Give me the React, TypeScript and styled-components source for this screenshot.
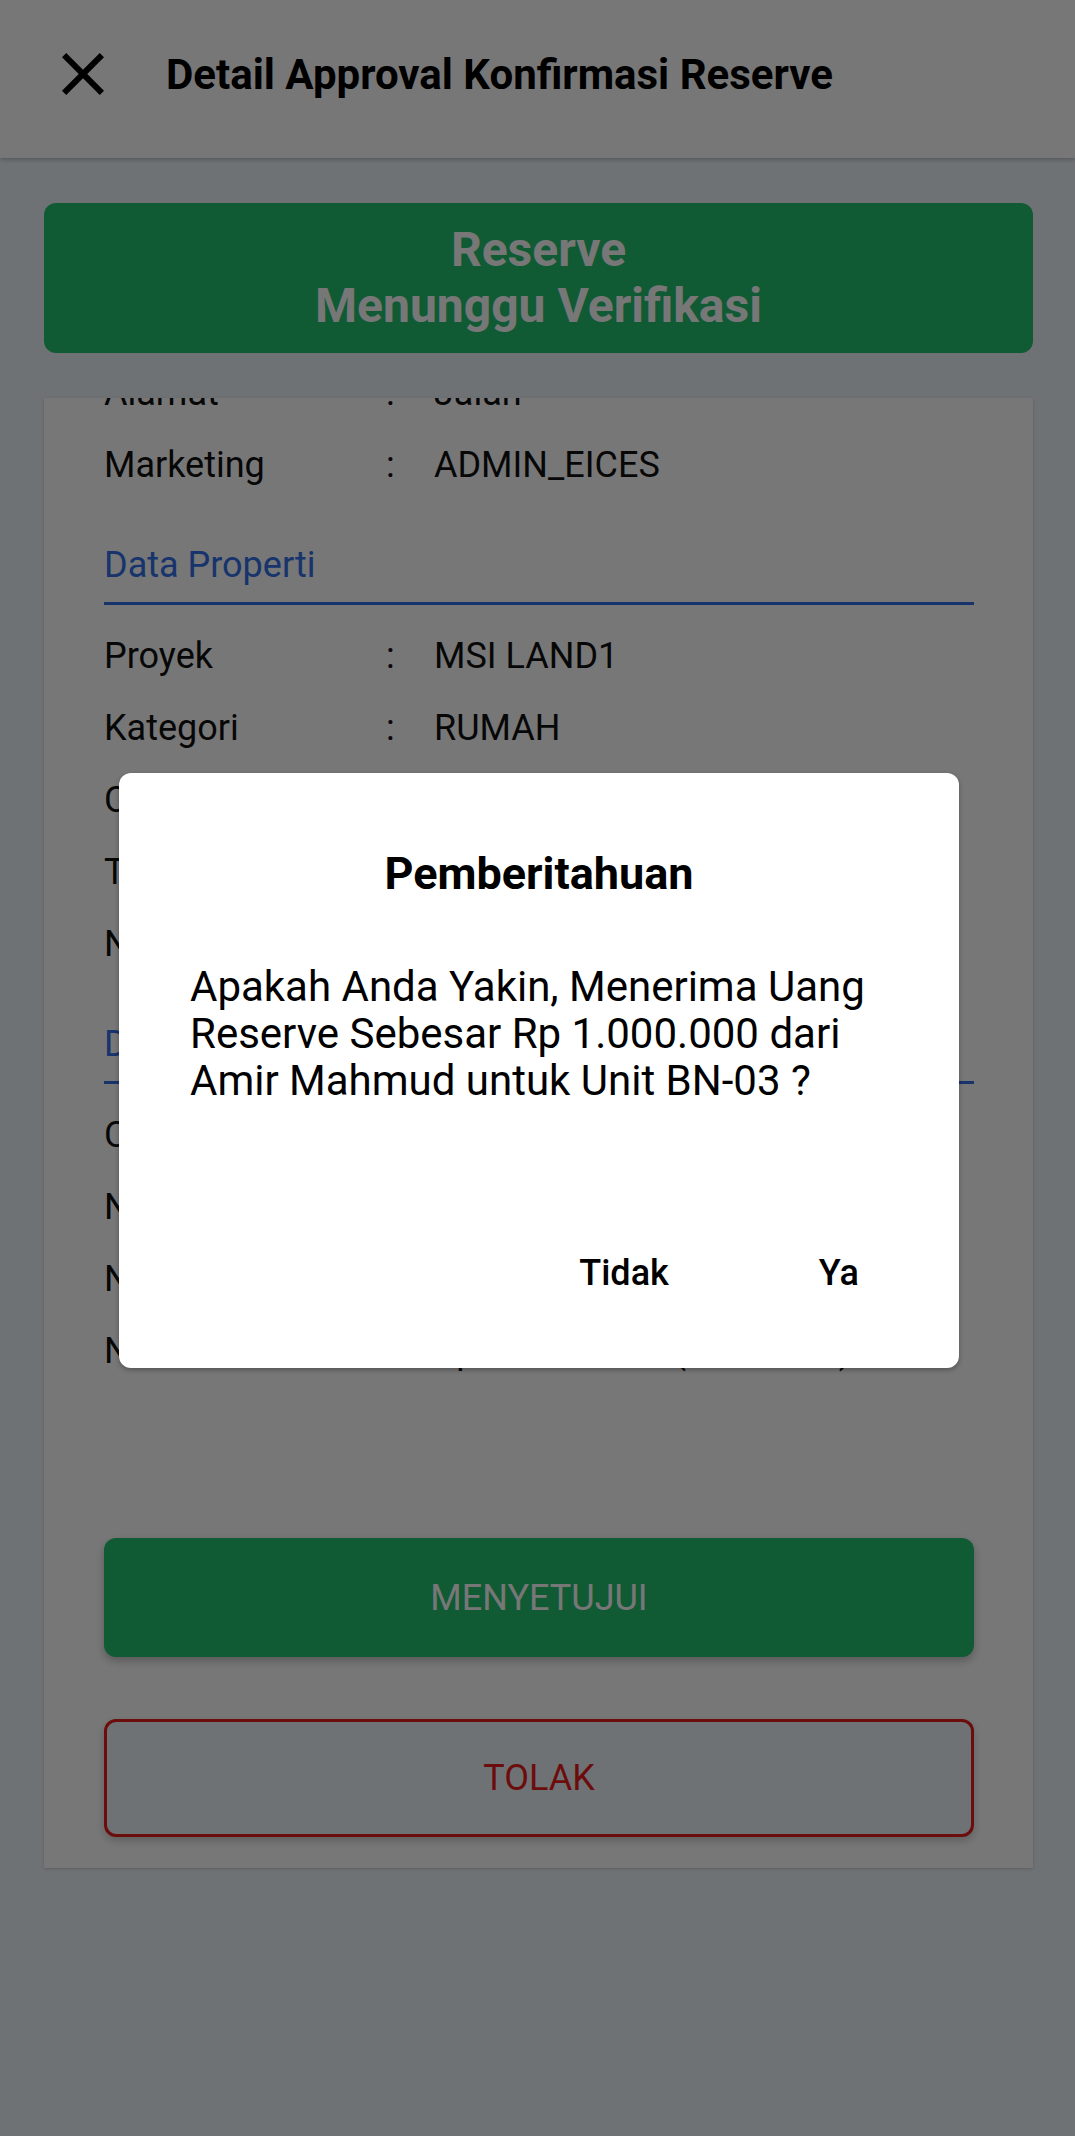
import React, { useLayoutEffect, useRef } from "react";
import styled, { createGlobalStyle } from "styled-components";

const PAGE_BG = "#eef4fb";
const GREEN = "#24c171";
const BLUE = "#3570e8";
const RED = "#e81c1c";

const GlobalStyle = createGlobalStyle`
  * { box-sizing: border-box; }
  html, body { margin: 0; padding: 0; }
  body {
    font-family: Roboto, "Noto Sans", "Liberation Sans", Arial, sans-serif;
    background: ${PAGE_BG};
    color: #111;
  }
`;

const Screen = styled.div`
  position: relative;
  width: 100%;
  height: 2136px;
  overflow: hidden;
  background: ${PAGE_BG};
  display: flex;
  flex-direction: column;
`;

const Header = styled.header`
  height: 158px;
  flex-shrink: 0;
  background: #fff;
  display: flex;
  align-items: center;
  padding: 0 0 10px 62px;
  box-shadow: 0 2px 4px rgba(0, 0, 0, 0.22);
`;

const CloseButton = styled.button`
  width: 42px;
  height: 42px;
  padding: 0;
  border: none;
  background: none;
  display: flex;
  align-items: center;
  justify-content: center;
  color: #000;
`;

const Title = styled.h1`
  margin: 0 0 0 62px;
  font-size: 42px;
  font-weight: 700;
  color: #000;
  line-height: normal;
`;

const Content = styled.main`
  display: flex;
  flex-direction: column;
  gap: 45px;
  padding: 45px 42px 0 44px;
`;

const StatusBanner = styled.div`
  height: 150px;
  border-radius: 12px;
  background: ${GREEN};
  color: #fff;
  display: flex;
  flex-direction: column;
  align-items: center;
  justify-content: center;
  font-size: 48px;
  font-weight: 700;
  line-height: 56px;
`;

const Card = styled.section`
  height: 1470px;
  background: #fff;
  overflow: hidden;
  box-shadow: 0 1px 3px rgba(0, 0, 0, 0.18);
`;

const CardBody = styled.div`
  padding: 40px 59px 31px 60px;
`;

const SectionTitle = styled.h3`
  margin: 28px 0 0;
  font-size: 36px;
  font-weight: 400;
  color: ${BLUE};
  line-height: 72px;
  padding-bottom: 1px;
  border-bottom: 3px solid ${BLUE};

  &:first-child {
    margin-top: 0;
  }
`;

const Rows = styled.div`
  padding-top: 15px;
`;

const Row = styled.div`
  display: grid;
  grid-template-columns: 282px 48px 1fr;
  font-size: 36px;
  line-height: 72px;
  color: #111;
  white-space: nowrap;
`;

const Actions = styled.div`
  margin-top: 151px;
  display: flex;
  flex-direction: column;
  gap: 62px;
`;

const ApproveButton = styled.button`
  height: 119px;
  border: none;
  border-radius: 12px;
  background: ${GREEN};
  color: #fff;
  font-family: inherit;
  font-size: 36px;
  font-weight: 400;
  text-transform: uppercase;
  box-shadow: 0 4px 8px rgba(0, 0, 0, 0.25);
`;

const RejectButton = styled.button`
  height: 118px;
  border: 3px solid ${RED};
  border-radius: 12px;
  background: ${PAGE_BG};
  color: ${RED};
  font-family: inherit;
  font-size: 36px;
  font-weight: 400;
  text-transform: uppercase;
  box-shadow: 0 4px 8px rgba(0, 0, 0, 0.2);
`;

const Overlay = styled.div`
  position: absolute;
  inset: 0;
  background: rgba(0, 0, 0, 0.533);
  display: flex;
  align-items: center;
  justify-content: center;
  padding: 4px 0 0 3px;
`;

const Dialog = styled.div`
  width: 840px;
  background: #fff;
  border-radius: 12px;
  padding: 74px 0;
  box-shadow: 0 2px 5px rgba(0, 0, 0, 0.3);
  display: flex;
  flex-direction: column;
`;

const DialogTitle = styled.h2`
  margin: 0;
  text-align: center;
  font-size: 45px;
  font-weight: 700;
  line-height: normal;
  color: #000;
`;

const DialogMessage = styled.p`
  margin: 63px 74px 0 71px;
  font-size: 42px;
  line-height: 47px;
  color: #000;
`;

const DialogActions = styled.div`
  margin-top: 148px;
  display: flex;
  justify-content: flex-end;
  gap: 48px;
  padding-right: 49px;
`;

const DialogButton = styled.button`
  padding: 0 51px;
  border: none;
  background: none;
  font-family: inherit;
  font-size: 36px;
  font-weight: 500;
  line-height: normal;
  color: #000;
`;

const CloseIcon = () => (
  <svg width="42" height="42" viewBox="5 5 14 14" aria-hidden="true">
    <path
      fill="currentColor"
      d="M19 6.41L17.59 5 12 10.59 6.41 5 5 6.41 10.59 12 5 17.59 6.41 19 12 13.41 17.59 19 19 17.59 13.41 12z"
    />
  </svg>
);

type Item = { label: string; value: string };
type Section = { title: string; items: Item[] };

const sections: Section[] = [
  {
    title: "Data Konsumen",
    items: [
      { label: "Nama", value: "Amir Mahmud" },
      { label: "No. HP", value: "081234567890" },
      { label: "Email", value: "amir@gmail.com" },
      { label: "Alamat", value: "Jalan" },
      { label: "Marketing", value: "ADMIN_EICES" },
    ],
  },
  {
    title: "Data Properti",
    items: [
      { label: "Proyek", value: "MSI LAND1" },
      { label: "Kategori", value: "RUMAH" },
      { label: "Cluster", value: "BLOK BN" },
      { label: "Tipe", value: "36/72" },
      { label: "No. Unit", value: "BN-03" },
    ],
  },
  {
    title: "Data Pembayaran",
    items: [
      { label: "Cara Bayar", value: "CASH" },
      { label: "Nama Bank", value: "BCA" },
      { label: "No. Rekening", value: "1234567890" },
      { label: "Nominal", value: "Rp 1.000.000 - (Satu Juta)" },
    ],
  },
];

export default function App() {
  const cardRef = useRef<HTMLElement | null>(null);

  useLayoutEffect(() => {
    const el = cardRef.current;
    if (el) el.scrollTop = el.scrollHeight;
  }, []);

  return (
    <>
      <GlobalStyle />
      <Screen>
        <Header>
          <CloseButton aria-label="Tutup">
            <CloseIcon />
          </CloseButton>
          <Title>Detail Approval Konfirmasi Reserve</Title>
        </Header>

        <Content>
          <StatusBanner>
            <span>Reserve</span>
            <span>Menunggu Verifikasi</span>
          </StatusBanner>

          <Card ref={cardRef}>
            <CardBody>
              {sections.map((s) => (
                <React.Fragment key={s.title}>
                  <SectionTitle>{s.title}</SectionTitle>
                  <Rows>
                    {s.items.map((it) => (
                      <Row key={it.label}>
                        <span>{it.label}</span>
                        <span>:</span>
                        <span>{it.value}</span>
                      </Row>
                    ))}
                  </Rows>
                </React.Fragment>
              ))}
              <Actions>
                <ApproveButton>Menyetujui</ApproveButton>
                <RejectButton>Tolak</RejectButton>
              </Actions>
            </CardBody>
          </Card>
        </Content>

        <Overlay>
          <Dialog role="dialog" aria-modal="true">
            <DialogTitle>Pemberitahuan</DialogTitle>
            <DialogMessage>
              Apakah Anda Yakin, Menerima Uang Reserve Sebesar Rp 1.000.000 dari
              Amir Mahmud untuk Unit BN-03 ?
            </DialogMessage>
            <DialogActions>
              <DialogButton>Tidak</DialogButton>
              <DialogButton>Ya</DialogButton>
            </DialogActions>
          </Dialog>
        </Overlay>
      </Screen>
    </>
  );
}
